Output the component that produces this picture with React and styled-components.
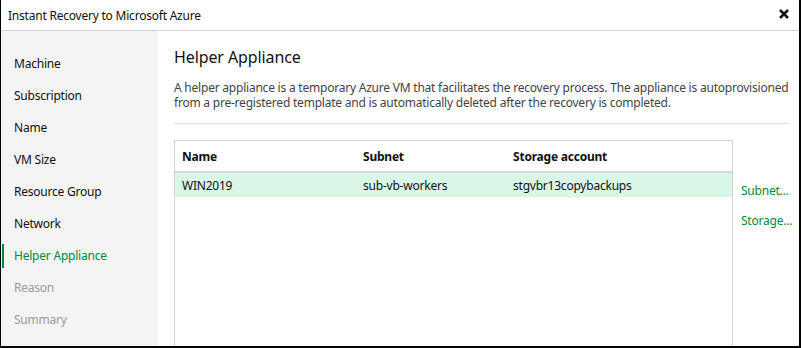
import React from "react";
import styled, { createGlobalStyle } from "styled-components";

const green = "#008a3e";

const steps = [
  { label: "Machine" },
  { label: "Subscription" },
  { label: "Name" },
  { label: "VM Size" },
  { label: "Resource Group" },
  { label: "Network" },
  { label: "Helper Appliance", active: true },
  { label: "Reason", disabled: true },
  { label: "Summary", disabled: true },
];

const rows = [
  { name: "WIN2019", subnet: "sub-vb-workers", storage: "stgvbr13copybackups", selected: true },
];

const App = () => {
  return (
    <>
      <GlobalStyle />
      <Window>
        <TitleBar>
          <Title>Instant Recovery to Microsoft Azure</Title>
          <CloseButton aria-label="Close">
            <svg width="10" height="10" viewBox="0 0 10 10">
              <path d="M1 1L9 9M9 1L1 9" stroke="#111" strokeWidth="2.5" />
            </svg>
          </CloseButton>
        </TitleBar>
        <Body>
          <Sidebar>
            {steps.map((step) => (
              <Step key={step.label} active={step.active} disabled={step.disabled}>
                {step.label}
              </Step>
            ))}
          </Sidebar>
          <Content>
            <Heading>Helper Appliance</Heading>
            <Description>
              A helper appliance is a temporary Azure VM that facilitates the recovery process. The appliance is
              autoprovisioned from a pre-registered template and is automatically deleted after the recovery is
              completed.
            </Description>
            <Divider />
            <TableArea>
              <Table>
                <HeaderRow>
                  <HeaderCell>Name</HeaderCell>
                  <HeaderCell>Subnet</HeaderCell>
                  <HeaderCell>Storage account</HeaderCell>
                </HeaderRow>
                {rows.map((row) => (
                  <Row key={row.name} selected={row.selected}>
                    <Cell>{row.name}</Cell>
                    <Cell>{row.subnet}</Cell>
                    <Cell>{row.storage}</Cell>
                  </Row>
                ))}
              </Table>
              <Actions>
                <Link>Subnet...</Link>
                <Link>Storage...</Link>
              </Actions>
            </TableArea>
          </Content>
        </Body>
      </Window>
    </>
  );
};

const GlobalStyle = createGlobalStyle`
  html, body {
    margin: 0;
    padding: 0;
    background: #fff;
  }
  body {
    font-family: "Noto Sans", "Open Sans", sans-serif;
    font-size: 12px;
    letter-spacing: -0.22px;
    color: #111;
  }
`;

const Window = styled.div`
  width: 801px;
  height: 348px;
  box-sizing: border-box;
  border-left: 1px solid #000;
  border-right: 2px solid #000;
  border-bottom: 2px solid #000;
  display: flex;
  flex-direction: column;
  overflow: hidden;
  background: #fff;
`;

const TitleBar = styled.div`
  height: 30px;
  flex-shrink: 0;
  display: flex;
  align-items: center;
  justify-content: space-between;
  padding: 0 10px 0 7px;
  border-bottom: 1px solid #d4d4d4;
`;

const Title = styled.div`
  font-size: 12px;
  color: #111;
`;

const CloseButton = styled.div`
  display: flex;
  align-items: center;
  margin-top: -3px;
`;

const Body = styled.div`
  flex: 1;
  display: flex;
  min-height: 0;
`;

const Sidebar = styled.div`
  width: 157px;
  flex-shrink: 0;
  background: #f3f4f3;
  padding-top: 17px;
  display: flex;
  flex-direction: column;
`;

const Step = styled.div`
  position: relative;
  height: 32px;
  line-height: 32px;
  padding-left: 13px;
  font-size: 12px;
  color: ${({ active, disabled }) => (active ? green : disabled ? "#9a9a9a" : "#111")};

  &::before {
    content: "";
    display: ${({ active }) => (active ? "block" : "none")};
    position: absolute;
    left: 1px;
    top: 4px;
    width: 2px;
    height: 24px;
    background: ${green};
  }
`;

const Content = styled.div`
  flex: 1;
  display: flex;
  flex-direction: column;
  padding: 15px 10px 0 16px;
  min-width: 0;
`;

const Heading = styled.div`
  font-size: 16px;
  letter-spacing: -0.1px;
  color: #111;
  line-height: 22px;
`;

const Description = styled.div`
  margin-top: 12px;
  font-size: 12px;
  line-height: 15px;
  color: #444;
`;

const Divider = styled.div`
  height: 1px;
  background: #dcdcdc;
  margin-top: 13px;
`;

const TableArea = styled.div`
  flex: 1;
  display: flex;
  margin-top: 16px;
  min-height: 0;
`;

const Table = styled.div`
  width: 559px;
  flex-shrink: 0;
  box-sizing: border-box;
  border: 1px solid #d4d4d4;
  border-bottom: none;
`;

const HeaderRow = styled.div`
  display: grid;
  grid-template-columns: 181px 150px 1fr;
  height: 30px;
  align-items: center;
  border-bottom: 2px solid #d8d8d8;
`;

const Row = styled.div`
  display: grid;
  grid-template-columns: 181px 150px 1fr;
  height: 24px;
  align-items: center;
  background: ${({ selected }) => (selected ? "#d9f7e6" : "transparent")};
`;

const HeaderCell = styled.div`
  padding-left: 7px;
  font-weight: 700;
  font-size: 12px;
  color: #111;
`;

const Cell = styled.div`
  padding-left: 7px;
  font-size: 12px;
  color: #111;
`;

const Actions = styled.div`
  display: flex;
  flex-direction: column;
  gap: 13px;
  padding: 42px 0 0 8px;
`;

const Link = styled.div`
  font-size: 12px;
  color: ${green};
  cursor: pointer;
`;

export default App;
